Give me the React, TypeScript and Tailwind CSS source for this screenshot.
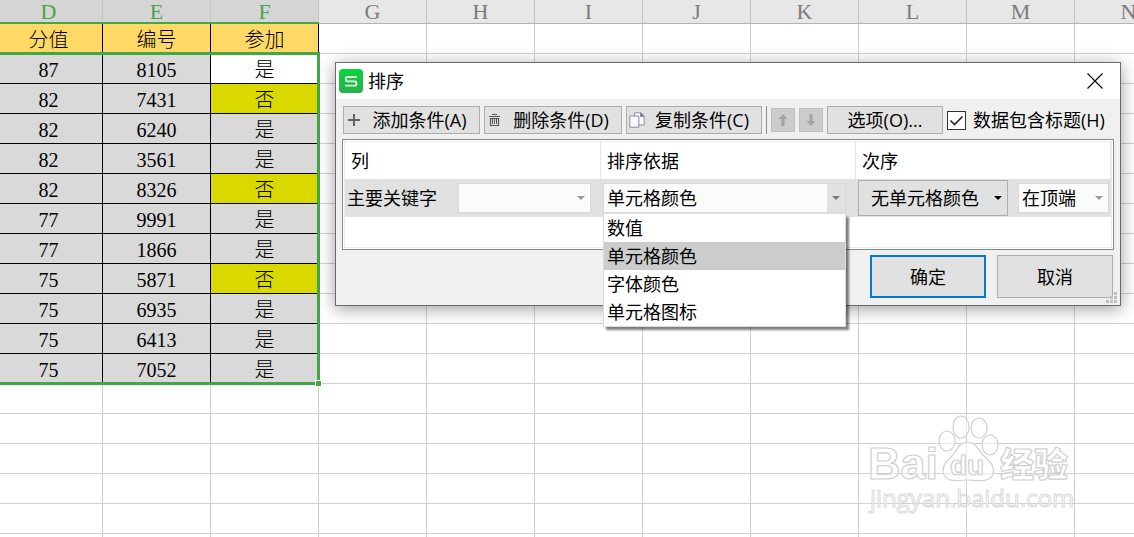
import { ReactNode, useState } from "react"
import { clsx } from "clsx"

const COLUMNS = ["D", "E", "F", "G", "H", "I", "J", "K", "L", "M", "N"]
const TITLES = ["分值", "编号", "参加"]
const ROWS = [
    ["87", "8105", "是"],
    ["82", "7431", "否"],
    ["82", "6240", "是"],
    ["82", "3561", "是"],
    ["82", "8326", "否"],
    ["77", "9991", "是"],
    ["77", "1866", "是"],
    ["75", "5871", "否"],
    ["75", "6935", "是"],
    ["75", "6413", "是"],
    ["75", "7052", "是"],
]
const EMPTY_ROWS = [1, 2, 3, 4, 5, 6]
const SORT_BASIS = ["数值", "单元格颜色", "字体颜色", "单元格图标"]

export default function App() {
    return (
        <div className="relative h-screen overflow-hidden bg-white text-black">
            <Sheet />
            <SortDialog />
            <Watermark />
        </div>
    )
}

function Sheet() {
    return (
        <div className="relative -ml-[5px] w-max font-['Liberation_Serif','Noto_Sans_CJK_SC',serif]">
            <table className="table-fixed border-separate border-spacing-0 text-center text-[20px] leading-[26px] font-light">
                <colgroup>
                    {COLUMNS.map((c) => <col key={c} className="w-[108px]" />)}
                </colgroup>
                <thead>
                    <tr className="h-6">
                        {COLUMNS.map((c, i) => (
                            <th
                                key={c}
                                scope="col"
                                className={clsx(
                                    "border-r border-b border-r-[#c3c3c3] border-b-[#b3b3b3] p-0 text-[22px] leading-[23px] font-normal",
                                    i < 3 ? "bg-[#d5d5d5] text-[#43a743]" : "bg-[#e7e7e7] text-[#7b7b7b]"
                                )}
                            >
                                {c}
                            </th>
                        ))}
                    </tr>
                </thead>
                <tbody>
                    <tr className="h-[30px]">
                        {COLUMNS.map((c, i) => (
                            <td key={c} className={clsx("border-r border-b p-0 pt-[3px]", i < 3 ? "border-black bg-[#ffd966]" : "border-[#d0d0d0]")}>
                                {TITLES[i]}
                            </td>
                        ))}
                    </tr>
                    {ROWS.map((row, r) => (
                        <tr key={row[1]} className="h-[30px]">
                            {COLUMNS.map((c, i) => (
                                <td key={c} className={clsx("border-r border-b p-0 pt-[3px]", cellColor(row, r, i))}>
                                    {row[i]}
                                </td>
                            ))}
                        </tr>
                    ))}
                    {EMPTY_ROWS.map((r) => (
                        <tr key={r} className="h-[30px]">
                            {COLUMNS.map((c) => <td key={c} className="border-r border-b border-[#d0d0d0] p-0"></td>)}
                        </tr>
                    ))}
                </tbody>
            </table>
            {/* selected column headings, selection frame and fill handle */}
            <div className="absolute top-[22px] left-0 h-[2px] w-[324px] bg-[#43a743]"></div>
            <div className="absolute top-[52px] left-[-3px] h-[333px] w-[328px] border-3 border-[#43a743]">
                <div className="absolute -right-[5px] -bottom-[5px] size-[7px] border border-white bg-[#43a743]"></div>
            </div>
        </div>
    )
}

function cellColor(row: string[], r: number, i: number) {
    if (i > 2) return "border-[#d0d0d0]"
    if (row[i] == "否") return "border-black bg-[#d9d900]"
    if (r == 0 && i == 2) return "border-black bg-white"
    return "border-black bg-[#d9d9d9]"
}

function SortDialog() {
    const [checked, setChecked] = useState(true)
    const [basis, setBasis] = useState("单元格颜色")

    return (
        <div
            role="dialog"
            aria-labelledby="sort-title"
            className="absolute top-[62px] right-[13px] left-[335px] border border-[#6b6b6b] bg-[#f0f0f0] font-['Open_Sans','Noto_Sans_CJK_SC',sans-serif] text-[18px] leading-[26px] shadow-[0_3px_16px_rgba(0,0,0,0.38)]"
        >
            <div className="flex h-9 items-center bg-white pr-[17px] pb-px pl-[3px]">
                <Logo />
                <h1 id="sort-title" className="ml-[5px] grow">排序</h1>
                <button aria-label="关闭" className="flex size-4 items-center justify-center">
                    <svg viewBox="0 0 16 16" className="size-4" stroke="#000" strokeWidth="1.1">
                        <path d="M0.5 0.5 15.5 15.5M15.5 0.5 0.5 15.5" />
                    </svg>
                </button>
            </div>

            <div className="flex items-center gap-1 pt-[7px] pr-[6px] pl-[7px] whitespace-nowrap">
                <ToolButton className="w-[137px]" icon={<PlusIcon />}>添加条件(A)</ToolButton>
                <ToolButton className="w-[138px]" icon={<TrashIcon />}>删除条件(D)</ToolButton>
                <ToolButton className="w-[136px]" icon={<CopyIcon />}>复制条件(C)</ToolButton>
                <div className="h-7 w-px bg-[#8c8c8c]"></div>
                <ArrowButton label="上移" path="M6 0 10.5 5H7.5V12H4.5V5H1.5Z" />
                <ArrowButton label="下移" path="M6 12 1.5 7H4.5V0H7.5V7H10.5Z" />
                <button className="h-7 w-[116px] border border-[#adadad] bg-[#e1e1e1]">选项(O)...</button>
                <label className="flex grow items-center gap-[7px]">
                    <span className="relative flex size-[19px] shrink-0">
                        <input
                            type="checkbox"
                            checked={checked}
                            onChange={(e) => setChecked(e.target.checked)}
                            className="size-[19px] appearance-none border border-[#333] bg-white"
                        />
                        {checked && (
                            <svg viewBox="0 0 19 19" className="pointer-events-none absolute inset-0" fill="none" stroke="#222" strokeWidth="1.6">
                                <path d="M3.5 9.5 7.5 13.5 15.5 5.5" />
                            </svg>
                        )}
                    </span>
                    数据包含标题(H)
                </label>
            </div>

            <div className="mx-[6px] mt-[5px] h-[111px] border border-[#828790] bg-white p-px">
                <div className="h-full border border-[#ececec]">
                    <div className="flex h-[37px] items-center">
                        <div className="flex h-full w-[256px] items-center border-r border-[#e5e5e5] pl-[6px]">列</div>
                        <div className="flex h-full w-[255px] items-center border-r border-[#e5e5e5] pl-[6px]">排序依据</div>
                        <div className="flex h-full grow items-center border-r border-[#e5e5e5] pl-[6px]">次序</div>
                    </div>
                    <div className="flex h-[38px] items-center bg-[#e1e1e1] pr-[2px]">
                        <div className="flex w-[256px] items-center justify-between pr-[10px] pl-[2px]">
                            <label htmlFor="key">主要关键字</label>
                            <ComboBox id="key" className="w-[133px]" options={[""]} />
                        </div>
                        <div className="relative w-[257px] pl-[2px]">
                            <ComboBox
                                id="basis"
                                label="排序依据"
                                className="w-[243px]"
                                options={SORT_BASIS}
                                value={basis}
                                onChange={setBasis}
                                open
                            />
                            <ul role="listbox" aria-label="排序依据" className="absolute top-[31px] left-[2px] z-10 w-[243px] border border-t-0 border-[#dcdcdc] bg-white shadow-[3px_3px_2px_rgba(0,0,0,0.5)]">
                                {SORT_BASIS.map((o) => (
                                    <li
                                        key={o}
                                        role="option"
                                        aria-selected={o == basis}
                                        onClick={() => setBasis(o)}
                                        className={clsx("h-7 pl-[3px] leading-7", o == basis && "bg-[#cccccc]")}
                                    >
                                        {o}
                                    </li>
                                ))}
                            </ul>
                        </div>
                        <button className="flex h-9 w-[150px] items-center justify-between border border-[#adadad] bg-[#e1e1e1] pr-[5px] pl-3">
                            无单元格颜色
                            <Caret className="text-black" />
                        </button>
                        <div className="ml-[10px] grow">
                            <ComboBox id="position" label="位置" className="w-full" options={["在顶端", "在底端"]} />
                        </div>
                    </div>
                </div>
            </div>

            <div className="flex justify-end gap-[11px] pt-[5px] pr-[7px] pb-[7px]">
                <button className="h-[43px] w-[116px] border-2 border-[#0078d7] bg-[#e1e1e1]">确定</button>
                <button className="h-[43px] w-[116px] border border-[#adadad] bg-[#e1e1e1]">取消</button>
            </div>
            <svg viewBox="0 0 11 11" className="absolute right-[3px] bottom-[2px] size-[11px]" fill="#bfbfbf">
                <path d="M8 0h3v3h-3zM4 4h3v3h-3zM8 4h3v3h-3zM0 8h3v3h-3zM4 8h3v3h-3zM8 8h3v3h-3z" />
            </svg>
        </div>
    )
}

function ToolButton({ icon, className, children }: { icon: ReactNode; className: string; children: ReactNode }) {
    return (
        <button className={clsx("flex h-7 items-center border border-[#adadad] bg-[#e1e1e1] pr-[2px] pl-[2px]", className)}>
            {icon}
            <span className="grow text-center">{children}</span>
        </button>
    )
}

function ArrowButton({ label, path }: { label: string; path: string }) {
    return (
        <button disabled aria-label={label} className="flex size-6 items-center justify-center border border-[#bfbfbf] bg-[#cccccc]">
            <svg viewBox="0 0 12 12" className="size-3" fill="#a3a3a3"><path d={path} /></svg>
        </button>
    )
}

type ComboProps = {
    id: string
    label?: string
    className: string
    options: string[]
    value?: string
    onChange?: (v: string) => void
    open?: boolean
}

function ComboBox({ id, label, className, options, value, onChange, open }: ComboProps) {
    return (
        <div className={clsx("relative flex h-[30px] border border-[#d9d9d9] bg-[#fbfbfb]", className)}>
            <select
                id={id}
                aria-label={label}
                value={value}
                onChange={(e) => onChange?.(e.target.value)}
                className="w-full appearance-none pl-[3px] leading-7 outline-none"
            >
                {options.map((o) => <option key={o}>{o}</option>)}
            </select>
            <span className={clsx("pointer-events-none absolute inset-y-0 right-0 flex w-[18px] items-center justify-center", open && "bg-[#e1e1e1]")}>
                <Caret className={open ? "text-[#7a7a7a]" : "text-[#999999]"} />
            </span>
        </div>
    )
}

function Caret({ className }: { className: string }) {
    return (
        <svg viewBox="0 0 8 4" className={clsx("h-1 w-2", className)} fill="currentColor">
            <path d="M0 0H8L4 4Z" />
        </svg>
    )
}

function Logo() {
    return (
        <svg viewBox="0 0 24 24" className="size-6">
            <defs>
                <linearGradient id="logo" x1="0" y1="0" x2="0" y2="1">
                    <stop offset="0" stopColor="#06d53c" />
                    <stop offset="1" stopColor="#2bad4e" />
                </linearGradient>
            </defs>
            <rect width="24" height="24" rx="4" fill="url(#logo)" />
            <path
                d="M17.800 8H8.500Q6.800 8 6.800 9.400V10.700Q6.800 12.300 8.500 12.300H15.800Q17.400 12.300 17.400 13.800V15Q17.400 16.700 15.800 16.700H6"
                fill="none"
                stroke="#e8ffe8"
                strokeWidth="1.8"
            />
        </svg>
    )
}

function PlusIcon() {
    return (
        <svg viewBox="0 0 16 16" className="size-4" stroke="#5f6166" strokeWidth="2">
            <path d="M8 2V14M2 8H14" />
        </svg>
    )
}

function TrashIcon() {
    return (
        <svg viewBox="0 0 16 16" className="size-4" fill="none" stroke="#55565c">
            <path d="M5 2.500H10M2 4.500H13" />
            <path d="M3.500 6V13.500H11.500V6" strokeWidth="1.200" />
            <path d="M3 6.500H12M5.500 6.500V12M7.500 6.500V12M9.500 6.500V12" />
        </svg>
    )
}

function CopyIcon() {
    return (
        <svg viewBox="0 0 16 16" className="size-4" fill="#fafafa" stroke="#8e8ba3" strokeWidth="1">
            <path d="M5.500 0.800H12L15.200 4V13H5.500Z" />
            <path d="M11.500 0.800V4.500H15.200Z" fill="#77748c" />
            <path d="M0.800 4H9.800V15.200H0.800Z" />
        </svg>
    )
}

function Watermark() {
    return (
        <svg
            viewBox="0 0 210 104"
            className="pointer-events-none absolute right-[58px] bottom-[23px] h-[104px] w-[210px]"
            fill="#ffffff"
            fillOpacity="0.6"
            stroke="#d0d0d0"
            strokeWidth="1.2"
            strokeLinejoin="round"
        >
            <text x="2" y="69" fontSize="45" fontWeight="700" fontFamily="Liberation Sans">Bai</text>
            <ellipse cx="81" cy="31" rx="8" ry="10" />
            <ellipse cx="95" cy="17" rx="8" ry="11" />
            <ellipse cx="113" cy="18" rx="8" ry="10" />
            <ellipse cx="124" cy="35" rx="8" ry="10" />
            <path d="M101 32C111 32 112 41 119 47C126 53 130 59 126 66C122 73 111 70 102 70C93 70 82 73 78 65C75 58 79 52 85 47C91 42 92 32 101 32Z" />
            <text x="84" y="65" fontSize="28" fontWeight="700" fontFamily="Liberation Sans">du</text>
            <text x="134" y="67" fontSize="34" fontWeight="900" fontFamily="Noto Sans CJK SC">经验</text>
            <text x="4" y="97" fontSize="24" fontFamily="Open Sans" stroke="#dadada" strokeWidth="1">jingyan.baidu.com</text>
        </svg>
    )
}
